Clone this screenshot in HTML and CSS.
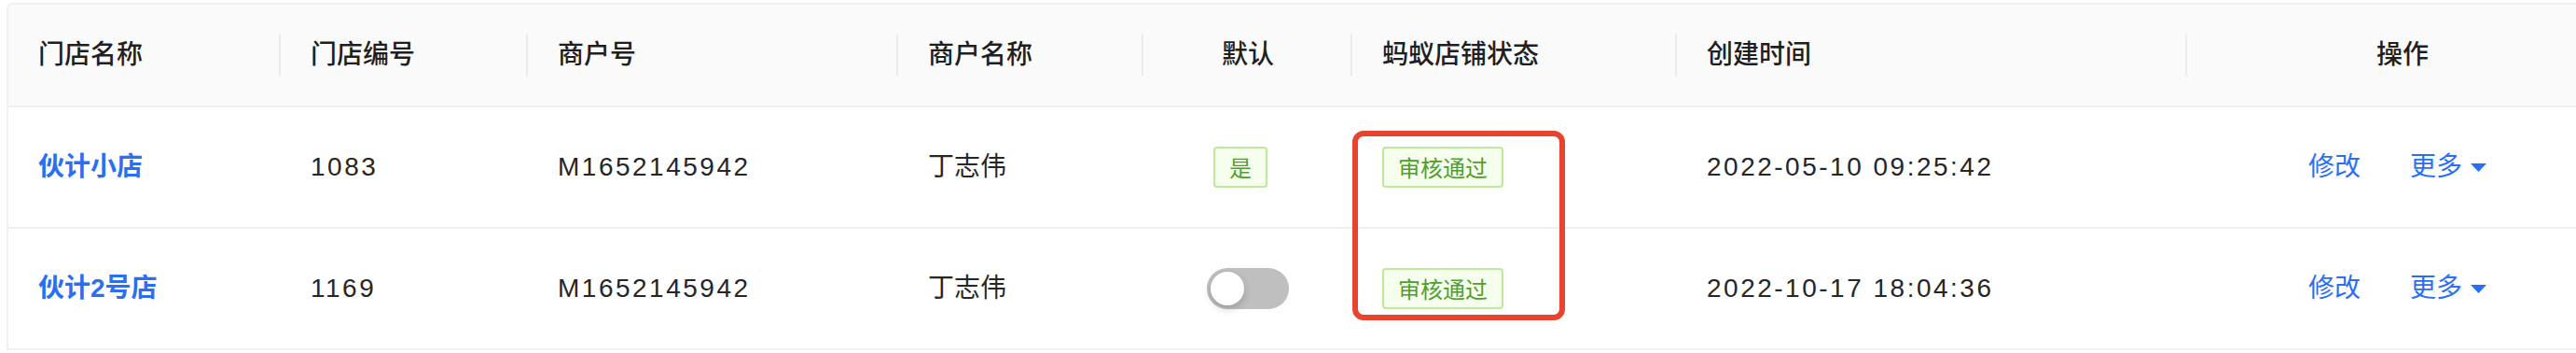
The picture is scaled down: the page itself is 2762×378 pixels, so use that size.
FILE: index.html
```html
<!DOCTYPE html>
<html lang="zh-CN">
<head>
<meta charset="utf-8">
<title>门店列表</title>
<link rel="stylesheet" href="styles.css">
</head>
<body>
<div class="table-wrap">
  <table class="store-table">
    <colgroup>
      <col class="w-name">
      <col class="w-code">
      <col class="w-merchant">
      <col class="w-mname">
      <col class="w-default">
      <col class="w-status">
      <col class="w-time">
      <col class="w-ops">
    </colgroup>
    <thead>
      <tr>
        <th><div class="cell">门店名称</div></th>
        <th><div class="cell">门店编号</div></th>
        <th><div class="cell">商户号</div></th>
        <th><div class="cell">商户名称</div></th>
        <th><div class="cell center">默认</div></th>
        <th><div class="cell">蚂蚁店铺状态</div></th>
        <th><div class="cell">创建时间</div></th>
        <th class="last"><div class="cell center">操作</div></th>
      </tr>
    </thead>
    <tbody>
      <tr>
        <td><div class="cell"><a class="link name">伙计小店</a></div></td>
        <td><div class="cell num">1083</div></td>
        <td><div class="cell num">M1652145942</div></td>
        <td><div class="cell">丁志伟</div></td>
        <td><div class="cell center"><span class="tag">是</span></div></td>
        <td><div class="cell"><span class="tag">审核通过</span></div></td>
        <td><div class="cell num">2022-05-10 09:25:42</div></td>
        <td><div class="cell center ops"><a class="link">修改</a><a class="link more">更多<svg class="caret" width="17" height="9" viewBox="0 0 17 9"><polygon points="0,0 17,0 8.5,9" fill="currentColor"/></svg></a></div></td>
      </tr>
      <tr>
        <td><div class="cell"><a class="link name">伙计2号店</a></div></td>
        <td><div class="cell num">1169</div></td>
        <td><div class="cell num">M1652145942</div></td>
        <td><div class="cell">丁志伟</div></td>
        <td><div class="cell center"><span class="switch"><span class="handle"></span></span></div></td>
        <td><div class="cell"><span class="tag">审核通过</span></div></td>
        <td><div class="cell num">2022-10-17 18:04:36</div></td>
        <td><div class="cell center ops"><a class="link">修改</a><a class="link more">更多<svg class="caret" width="17" height="9" viewBox="0 0 17 9"><polygon points="0,0 17,0 8.5,9" fill="currentColor"/></svg></a></div></td>
      </tr>
    </tbody>
  </table>
  <div class="annotation"></div>
</div>
</body>
</html>
```

FILE: styles.css
```css
html, body {
  margin: 0;
  padding: 0;
  background: #ffffff;
  overflow: hidden;
}

body {
  padding: 3px 0 0 7px;
  font-family: "Liberation Sans", "Noto Sans CJK SC", sans-serif;
  font-size: 28px;
  color: #262626;
}

.table-wrap {
  position: relative;
  width: 2798px;
  border: 2px solid #f0f0f0;
  border-bottom: none;
  border-radius: 6px 6px 0 0;
  overflow: hidden;
}

.store-table {
  width: 2798px;
  table-layout: fixed;
  border-collapse: separate;
  border-spacing: 0;
}

.w-name { width: 292px; }
.w-code { width: 265px; }
.w-merchant { width: 397px; }
.w-mname { width: 263px; }
.w-default { width: 224px; }
.w-status { width: 348px; }
.w-time { width: 547px; }
.w-ops { width: 462px; }

.store-table th {
  position: relative;
  background: #fafafa;
  padding: 32px 32px;
  font-weight: 500;
  text-align: left;
  color: #1f1f1f;
  border-bottom: 2px solid #f0f0f0;
}

.store-table th::before {
  content: "";
  position: absolute;
  right: 0;
  top: 50%;
  width: 2px;
  height: 45px;
  transform: translateY(-50%);
  background: #ebebeb;
}

.store-table th.last::before {
  display: none;
}

.store-table td {
  padding: 42px 32px;
  border-bottom: 2px solid #f0f0f0;
}

.cell {
  display: flex;
  align-items: center;
  height: 44px;
  line-height: 44px;
  white-space: nowrap;
}

.cell.center {
  justify-content: center;
}

.num {
  letter-spacing: 2.5px;
}

.link {
  color: #2a6ff2;
  text-decoration: none;
}

.link.name {
  font-weight: 600;
}

.ops {
  padding-right: 11px;
}

.ops .link + .link {
  margin-left: 53px;
}

.more {
  display: flex;
  align-items: center;
}

.caret {
  margin-left: 9px;
  display: block;
}

.tag {
  display: inline-block;
  box-sizing: border-box;
  height: 44px;
  line-height: 40px;
  padding: 0 15px;
  margin-right: 16px;
  font-size: 24px;
  font-family: "Noto Sans CJK SC", sans-serif;
  color: #4f9f2e;
  background: #f6ffed;
  border: 2px solid #bfe99a;
  border-radius: 4px;
}

.switch {
  position: relative;
  display: inline-block;
  width: 88px;
  height: 44px;
  border-radius: 22px;
  background: #bfbfbf;
}

.switch .handle {
  position: absolute;
  left: 4px;
  top: 4px;
  width: 36px;
  height: 36px;
  border-radius: 50%;
  background: #ffffff;
  box-shadow: 0 4px 8px rgba(0, 35, 11, 0.2);
}

.annotation {
  position: absolute;
  left: 1441px;
  top: 135px;
  width: 228px;
  height: 203px;
  box-sizing: border-box;
  border: 6px solid #e8432e;
  border-radius: 12px;
}
```
